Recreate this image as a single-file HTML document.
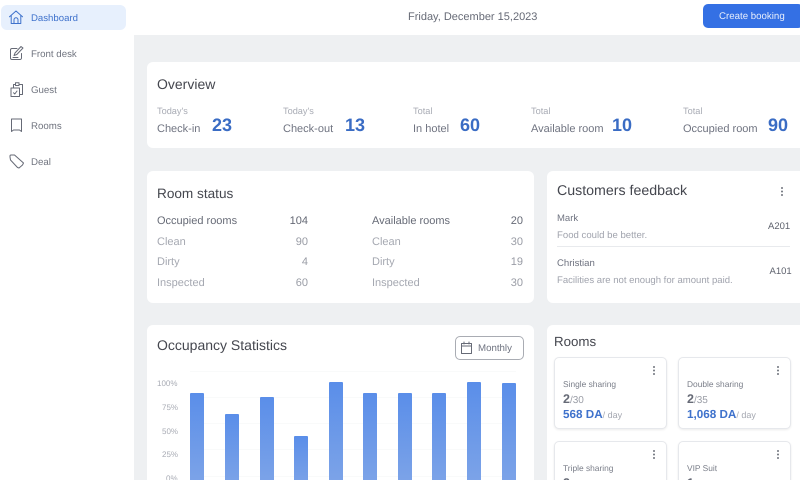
<!DOCTYPE html>
<html><head><meta charset="utf-8"><style>
html,body{margin:0;padding:0;width:800px;height:480px;overflow:hidden;background:#eef0f2}
body{position:relative;font-family:"Liberation Sans",sans-serif;text-rendering:geometricPrecision}
#w{position:absolute;left:0;top:0;width:800px;height:480px;overflow:hidden;filter:blur(.35px)}
.b{position:absolute;background:#fff}
.r{border-radius:6px}
.t{position:absolute;white-space:nowrap;line-height:14px;height:14px}
.h{font-size:14px;color:#45474f}
.g{font-size:9.200px;color:#a9acb5}
.m{font-size:11px;color:#6f7380}
.n{font-size:11px;color:#666a76}
.l{font-size:11px;color:#a5a8b1}
.v{font-size:11px;text-align:right;width:40px;color:#9a9da6}
.big{font-size:18px;font-weight:bold;color:#3a6cc4}
.side{font-size:9.700px;color:#70747f}
.ax{font-size:8px;color:#a9acb5}
.rn{font-size:8.400px;color:#7a7e89}
.bar{position:absolute;width:14px;bottom:-10px;border-radius:1px 1px 0 0;background:linear-gradient(#5a8ee9,#7fa5e8)}
.card{position:absolute;width:111px;height:70px;background:#fff;border:1px solid #e6e8ec;border-radius:5px;box-shadow:0 1px 2px rgba(0,0,0,.08)}
.dots{position:absolute;width:2px;height:2px;border-radius:1px;background:#70737c;box-shadow:0 3.500px 0 #70737c,0 7px 0 #70737c}
.gl{position:absolute;left:190px;width:326px;height:1px;background:#f9fafa}
svg{position:absolute;fill:none;stroke:#666a76;stroke-width:1;stroke-linecap:round;stroke-linejoin:round}
</style></head><body><div id="w">
<div class="b" style="left:0;top:0;width:134px;height:480px"></div>
<div class="b" style="left:0;top:0;width:800px;height:35px"></div>
<div class="b r" style="left:1px;top:5px;width:125px;height:25px;background:#e7f0fd"></div>

<svg style="left:8px;top:9px" width="16" height="16" viewBox="0 0 16 16"><path stroke="#3f72cc" d="M1.500 7.800 8 2l6.500 5.800M3.200 6.500V14.500H12.800V6.500M6 14.500V10.800a2 2 0 0 1 4 0v3.700"/></svg>
<svg style="left:9px;top:45px" width="15" height="16" viewBox="0 0 15 16"><path d="M8 3.500H3A1.500 1.500 0 0 0 1.500 5V13A1.500 1.500 0 0 0 3 14.500H11A1.500 1.500 0 0 0 12.500 13V8.500M5 10.500 6 8 12 1.500 14 3 7.800 9.500 5 10.500ZM4 12.500H9"/></svg>
<svg style="left:10px;top:81px" width="14" height="17" viewBox="0 0 14 17"><path d="M1 7H9.500V15.500H1ZM3.500 7V3.500H5.500M9 3.500H12.500V13.500H9.500M5.500 1.800H9V4.500H5.500ZM3.500 11.800 4.800 13 7 10"/></svg>
<svg style="left:10px;top:118px" width="13" height="15" viewBox="0 0 13 15"><path d="M1.500 1H11.500V13.500L9.500 12H3.500L1.500 13.500Z"/></svg>
<svg style="left:9px;top:154px" width="16" height="15" viewBox="0 0 16 15"><path d="M1 3V2A1 1 0 0 1 2 1H5.500L14.500 9 13.500 11 10 14 8.500 13.500 1.500 6Z"/></svg>

<div class="t" style="left:31px;top:11.500px;font-size:9.600px;color:#3f72cc">Dashboard</div>
<div class="t side" style="left:31px;top:47.500px">Front desk</div>
<div class="t side" style="left:31px;top:83.500px">Guest</div>
<div class="t side" style="left:31px;top:119.500px">Rooms</div>
<div class="t side" style="left:31px;top:155.500px">Deal</div>

<div class="t" style="left:408px;top:10px;font-size:11px;color:#666a76">Friday, December 15,2023</div>
<div class="b" style="left:703px;top:4px;width:100px;height:23.500px;background:#3470e4;border-radius:5px"></div>
<div class="t" style="left:719px;top:10px;font-size:9.700px;color:#e8effc">Create booking</div>

<div class="b r" style="left:147px;top:62px;width:660px;height:86px"></div>
<div class="t h" style="left:157px;top:77px">Overview</div>
<div class="t g" style="left:157px;top:104px">Today's</div>
<div class="t m" style="left:157px;top:121.500px">Check-in</div>
<div class="t big" style="left:212px;top:118px">23</div>
<div class="t g" style="left:283px;top:104px">Today's</div>
<div class="t m" style="left:283px;top:121.500px">Check-out</div>
<div class="t big" style="left:345px;top:118px">13</div>
<div class="t g" style="left:413px;top:104px">Total</div>
<div class="t m" style="left:413px;top:121.500px">In hotel</div>
<div class="t big" style="left:460px;top:118px">60</div>
<div class="t g" style="left:531px;top:104px">Total</div>
<div class="t m" style="left:531px;top:121.500px">Available room</div>
<div class="t big" style="left:612px;top:118px">10</div>
<div class="t g" style="left:683px;top:104px">Total</div>
<div class="t m" style="left:683px;top:121.500px">Occupied room</div>
<div class="t big" style="left:768px;top:118px">90</div>

<div class="b r" style="left:147px;top:171px;width:387px;height:132px"></div>
<div class="t h" style="left:157px;top:186.500px;font-size:13.600px">Room status</div>
<div class="t n" style="left:157px;top:214px">Occupied rooms</div><div class="t v" style="left:268px;top:214px;color:#666a76">104</div>
<div class="t l" style="left:157px;top:234.500px">Clean</div><div class="t v" style="left:268px;top:234.500px">90</div>
<div class="t l" style="left:157px;top:255px">Dirty</div><div class="t v" style="left:268px;top:255px">4</div>
<div class="t l" style="left:157px;top:275.500px">Inspected</div><div class="t v" style="left:268px;top:275.500px">60</div>
<div class="t n" style="left:372px;top:214px">Available rooms</div><div class="t v" style="left:483px;top:214px;color:#666a76">20</div>
<div class="t l" style="left:372px;top:234.500px">Clean</div><div class="t v" style="left:483px;top:234.500px">30</div>
<div class="t l" style="left:372px;top:255px">Dirty</div><div class="t v" style="left:483px;top:255px">19</div>
<div class="t l" style="left:372px;top:275.500px">Inspected</div><div class="t v" style="left:483px;top:275.500px">30</div>

<div class="b r" style="left:547px;top:171px;width:260px;height:132px"></div>
<div class="t h" style="left:557px;top:183.500px;font-size:14.200px">Customers feedback</div>
<div class="dots" style="left:781px;top:187px"></div>
<div class="t" style="left:557px;top:212px;font-size:9.500px;color:#6f7380">Mark</div>
<div class="t" style="left:557px;top:228.500px;font-size:9.600px;color:#a0a3ad">Food could be better.</div>
<div class="t" style="left:768px;top:220px;font-size:9.500px;color:#5f636e">A201</div>
<div style="position:absolute;left:557px;top:246px;width:233px;height:1px;background:#e8eaed"></div>
<div class="t" style="left:557px;top:257px;font-size:9.600px;color:#6f7380">Christian</div>
<div class="t" style="left:557px;top:273.500px;font-size:9.550px;color:#a0a3ad">Facilities are not enough for amount paid.</div>
<div class="t" style="left:769.500px;top:265px;font-size:9.500px;color:#5f636e">A101</div>

<div class="b r" style="left:147px;top:325px;width:387px;height:170px"></div>
<div class="t h" style="left:157px;top:338px">Occupancy Statistics</div>
<div style="position:absolute;left:455px;top:336px;width:67px;height:22px;border:1px solid #a9acb3;border-radius:5px"></div>
<svg style="left:460px;top:341px" width="13" height="14" viewBox="0 0 13 14"><path d="M1.500 2.500H11.500V12.500H1.500ZM1.500 5H11.500M4 1V3M9 1V3"/></svg>
<div class="t" style="left:478px;top:341.500px;font-size:9.700px;color:#6f7380">Monthly</div>
<div class="gl" style="top:371px"></div>
<div class="gl" style="top:397px"></div>
<div class="gl" style="top:423px"></div>
<div class="gl" style="top:449px"></div>
<div class="gl" style="top:476px"></div>
<div class="t ax" style="left:157px;top:377px">100%</div>
<div class="t ax" style="left:162px;top:400.500px">75%</div>
<div class="t ax" style="left:162px;top:424.500px">50%</div>
<div class="t ax" style="left:162px;top:447.500px">25%</div>
<div class="t ax" style="left:166px;top:471.500px">0%</div>
<div class="bar" style="left:190px;top:393px"></div>
<div class="bar" style="left:225px;top:414px"></div>
<div class="bar" style="left:260px;top:396.500px"></div>
<div class="bar" style="left:294px;top:435.500px"></div>
<div class="bar" style="left:329px;top:382px"></div>
<div class="bar" style="left:363px;top:393px"></div>
<div class="bar" style="left:398px;top:393px"></div>
<div class="bar" style="left:432px;top:393px"></div>
<div class="bar" style="left:467px;top:382px"></div>
<div class="bar" style="left:502px;top:382.500px"></div>

<div class="b r" style="left:547px;top:325px;width:260px;height:170px"></div>
<div class="t h" style="left:554px;top:335px;font-size:13.300px">Rooms</div>
<div class="card" style="left:554px;top:356.500px"></div>
<div class="card" style="left:678px;top:356.500px"></div>
<div class="card" style="left:554px;top:440.500px;height:60px"></div>
<div class="card" style="left:678px;top:440.500px;height:60px"></div>
<div class="dots" style="left:653px;top:366px"></div>
<div class="dots" style="left:777px;top:366px"></div>
<div class="dots" style="left:653px;top:450px"></div>
<div class="dots" style="left:777px;top:450px"></div>
<div class="t rn" style="left:563px;top:377px">Single sharing</div>
<div class="t rn" style="left:687px;top:377px">Double sharing</div>
<div class="t" style="left:563px;top:392px;font-size:12.500px;font-weight:bold;color:#666a76">2<span style="font-size:10px;font-weight:normal;color:#9a9da6">/30</span></div>
<div class="t" style="left:687px;top:392px;font-size:12.500px;font-weight:bold;color:#666a76">2<span style="font-size:10px;font-weight:normal;color:#9a9da6">/35</span></div>
<div class="t" style="left:563px;top:408px;font-size:11.700px;font-weight:bold;color:#3f72cc">568 DA<span style="font-size:9px;font-weight:normal;color:#a5a8b1">/ day</span></div>
<div class="t" style="left:687px;top:408px;font-size:11.700px;font-weight:bold;color:#3f72cc">1,068 DA<span style="font-size:9px;font-weight:normal;color:#a5a8b1">/ day</span></div>
<div class="t rn" style="left:563px;top:461px">Triple sharing</div>
<div class="t rn" style="left:687px;top:461px">VIP Suit</div>
<div class="t" style="left:563px;top:476px;font-size:12.500px;font-weight:bold;color:#666a76">2</div>
<div class="t" style="left:687px;top:476px;font-size:12.500px;font-weight:bold;color:#666a76">1</div>
</div></body></html>
